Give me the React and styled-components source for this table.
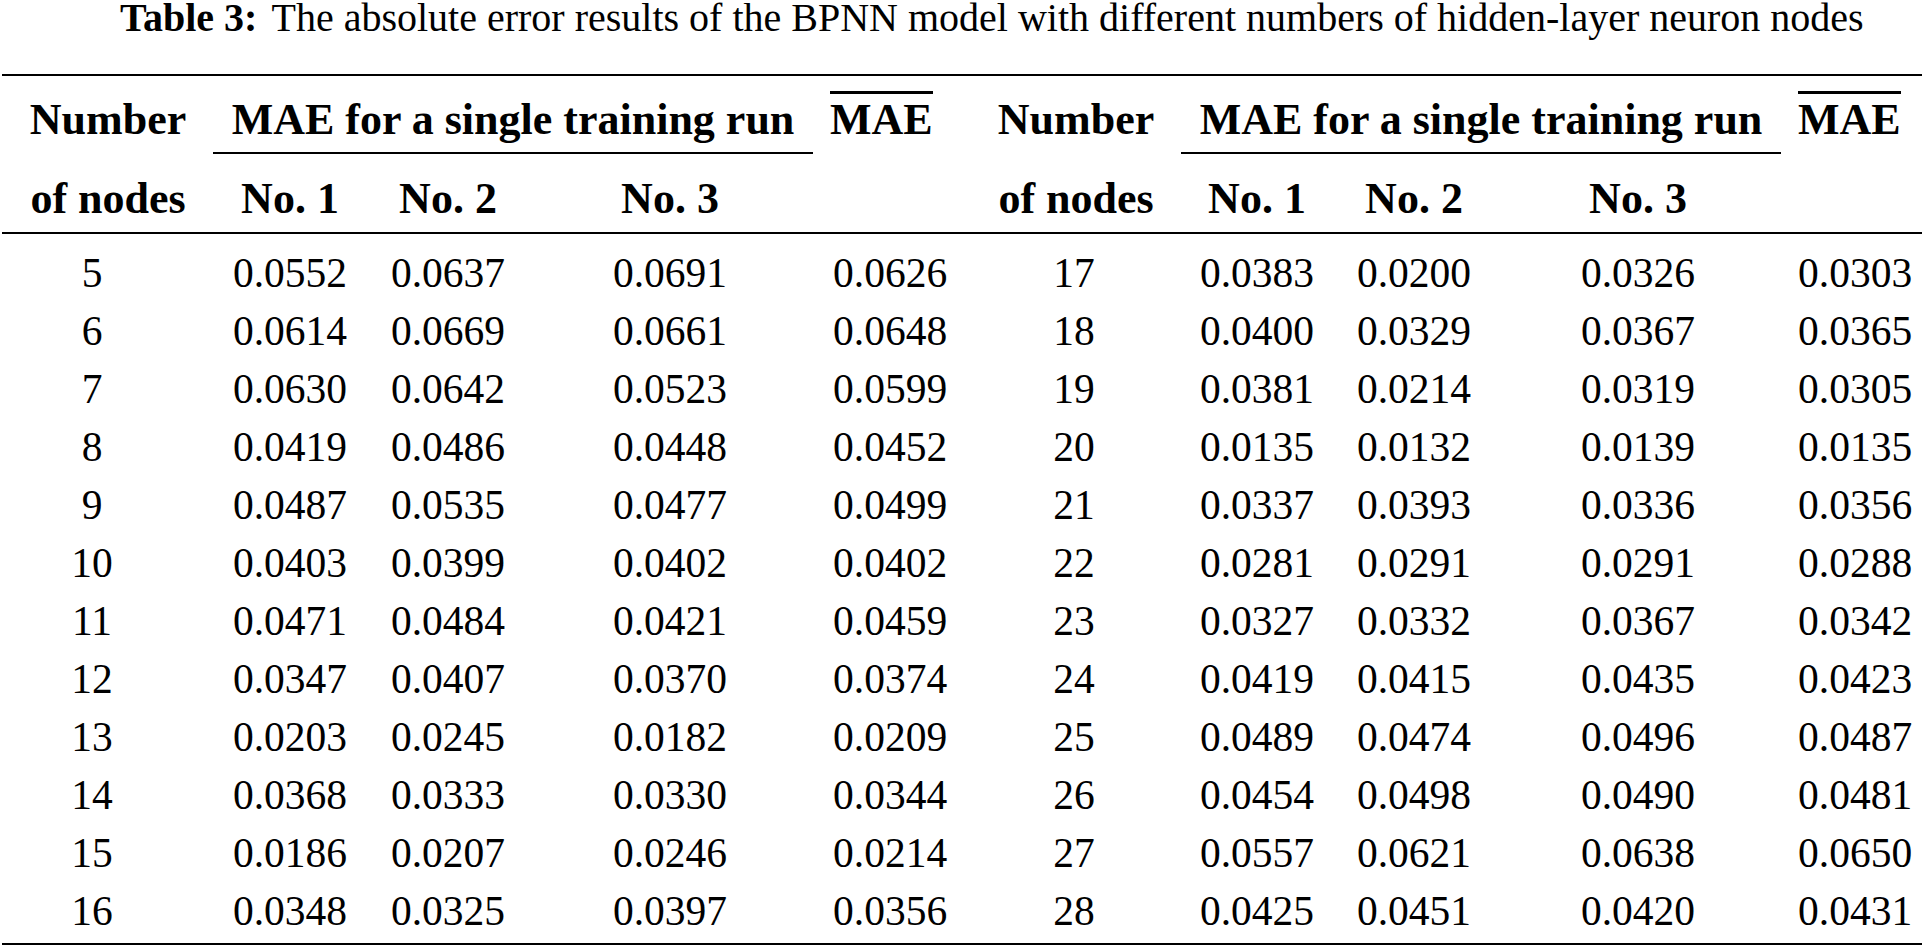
import React from "react";
import styled, { createGlobalStyle } from "styled-components";

const Global = createGlobalStyle`
  html, body { margin: 0; padding: 0; background: #fff; overflow: hidden; }
  body { font-family: "Liberation Serif", "Times New Roman", serif; color: #000; }
`;

const COLS = "212px 152px 164px 280px 170px 192px 170px 144px 304px 192px";

const Page = styled.div`
  width: 1982px;
  padding-left: 2px;
  box-sizing: border-box;
`;

const Caption = styled.div`
  font-size: 40px;
  line-height: 36px;
  padding-left: 118px;
  white-space: nowrap;
`;

const CaptionLabel = styled.b`
  font-weight: 700;
  margin-right: 14px;
`;

const Table = styled.div`
  margin-top: 38px;
  border-top: 2px solid #000;
  border-bottom: 2px solid #000;
`;

const Head = styled.div`
  display: grid;
  grid-template-columns: ${COLS};
  border-bottom: 2px solid #000;
  font-weight: 700;
  font-size: 44px;
  line-height: 50px;
  white-space: nowrap;
`;

const HeadCell = styled.div`
  grid-column: ${(p) => p.$col};
  grid-row: ${(p) => p.$row};
  text-align: ${(p) => p.$align || "center"};
  padding-top: ${(p) => (p.$row === 1 ? 19 : 20)}px;
  padding-bottom: ${(p) => (p.$row === 1 ? 9 : 8)}px;
  padding-left: ${(p) => p.$pl || 0}px;
`;

const SpanCell = styled.div`
  grid-column: ${(p) => p.$col};
  grid-row: 1;
  text-align: center;
  padding-top: 19px;
  padding-bottom: 7px;
  border-bottom: 2px solid #000;
  margin-left: ${(p) => p.$ml}px;
  margin-right: ${(p) => p.$mr}px;
`;

const BarCell = styled.div`
  grid-column: ${(p) => p.$col};
  grid-row: 1;
  padding-top: 15px;
  padding-left: ${(p) => p.$pl}px;
`;

const Bar = styled.span`
  display: inline-block;
  border-top: 3px solid #000;
  padding-top: 1px;
`;

const Body = styled.div`
  display: grid;
  grid-template-columns: ${COLS};
  grid-auto-rows: 58px;
  padding-top: 10px;
  padding-bottom: 3px;
  font-size: 41.5px;
  line-height: 58px;
  white-space: nowrap;
`;

const Cell = styled.div`
  text-align: ${(p) => p.$align || "center"};
  padding-left: ${(p) => p.$pl || 0}px;
  padding-right: ${(p) => p.$pr || 0}px;
`;

const left = [
  [5, "0.0552", "0.0637", "0.0691", "0.0626"],
  [6, "0.0614", "0.0669", "0.0661", "0.0648"],
  [7, "0.0630", "0.0642", "0.0523", "0.0599"],
  [8, "0.0419", "0.0486", "0.0448", "0.0452"],
  [9, "0.0487", "0.0535", "0.0477", "0.0499"],
  [10, "0.0403", "0.0399", "0.0402", "0.0402"],
  [11, "0.0471", "0.0484", "0.0421", "0.0459"],
  [12, "0.0347", "0.0407", "0.0370", "0.0374"],
  [13, "0.0203", "0.0245", "0.0182", "0.0209"],
  [14, "0.0368", "0.0333", "0.0330", "0.0344"],
  [15, "0.0186", "0.0207", "0.0246", "0.0214"],
  [16, "0.0348", "0.0325", "0.0397", "0.0356"],
];

const right = [
  [17, "0.0383", "0.0200", "0.0326", "0.0303"],
  [18, "0.0400", "0.0329", "0.0367", "0.0365"],
  [19, "0.0381", "0.0214", "0.0319", "0.0305"],
  [20, "0.0135", "0.0132", "0.0139", "0.0135"],
  [21, "0.0337", "0.0393", "0.0336", "0.0356"],
  [22, "0.0281", "0.0291", "0.0291", "0.0288"],
  [23, "0.0327", "0.0332", "0.0367", "0.0342"],
  [24, "0.0419", "0.0415", "0.0435", "0.0423"],
  [25, "0.0489", "0.0474", "0.0496", "0.0487"],
  [26, "0.0454", "0.0498", "0.0490", "0.0481"],
  [27, "0.0557", "0.0621", "0.0638", "0.0650"],
  [28, "0.0425", "0.0451", "0.0420", "0.0431"],
];

function Half({ row, side }) {
  const isLeft = side === "left";
  return (
    <>
      <Cell $pr={isLeft ? 32 : 4}>{row[0]}</Cell>
      <Cell>{row[1]}</Cell>
      <Cell>{row[2]}</Cell>
      <Cell>{row[3]}</Cell>
      <Cell $align="left" $pl={isLeft ? 23 : 8}>
        {row[4]}
      </Cell>
    </>
  );
}

export default function App() {
  return (
    <>
      <Global />
      <Page>
        <Caption>
          <CaptionLabel>Table 3:</CaptionLabel>
          The absolute error results of the BPNN model with different numbers of hidden-layer neuron nodes
        </Caption>
        <Table>
          <Head>
            <HeadCell $col="1" $row={1}>Number</HeadCell>
            <SpanCell $col="2 / 5" $ml={-1} $mr={-3}>MAE for a single training run</SpanCell>
            <BarCell $col="5" $pl={20}><Bar>MAE</Bar></BarCell>
            <HeadCell $col="6" $row={1}>Number</HeadCell>
            <SpanCell $col="7 / 10" $ml={9} $mr={9}>MAE for a single training run</SpanCell>
            <BarCell $col="10" $pl={8}><Bar>MAE</Bar></BarCell>

            <HeadCell $col="1" $row={2}>of nodes</HeadCell>
            <HeadCell $col="2" $row={2}>No. 1</HeadCell>
            <HeadCell $col="3" $row={2}>No. 2</HeadCell>
            <HeadCell $col="4" $row={2}>No. 3</HeadCell>
            <HeadCell $col="6" $row={2}>of nodes</HeadCell>
            <HeadCell $col="7" $row={2}>No. 1</HeadCell>
            <HeadCell $col="8" $row={2}>No. 2</HeadCell>
            <HeadCell $col="9" $row={2}>No. 3</HeadCell>
          </Head>
          <Body>
            {left.map((r, i) => (
              <React.Fragment key={r[0]}>
                <Half row={r} side="left" />
                <Half row={right[i]} side="right" />
              </React.Fragment>
            ))}
          </Body>
        </Table>
      </Page>
    </>
  );
}
